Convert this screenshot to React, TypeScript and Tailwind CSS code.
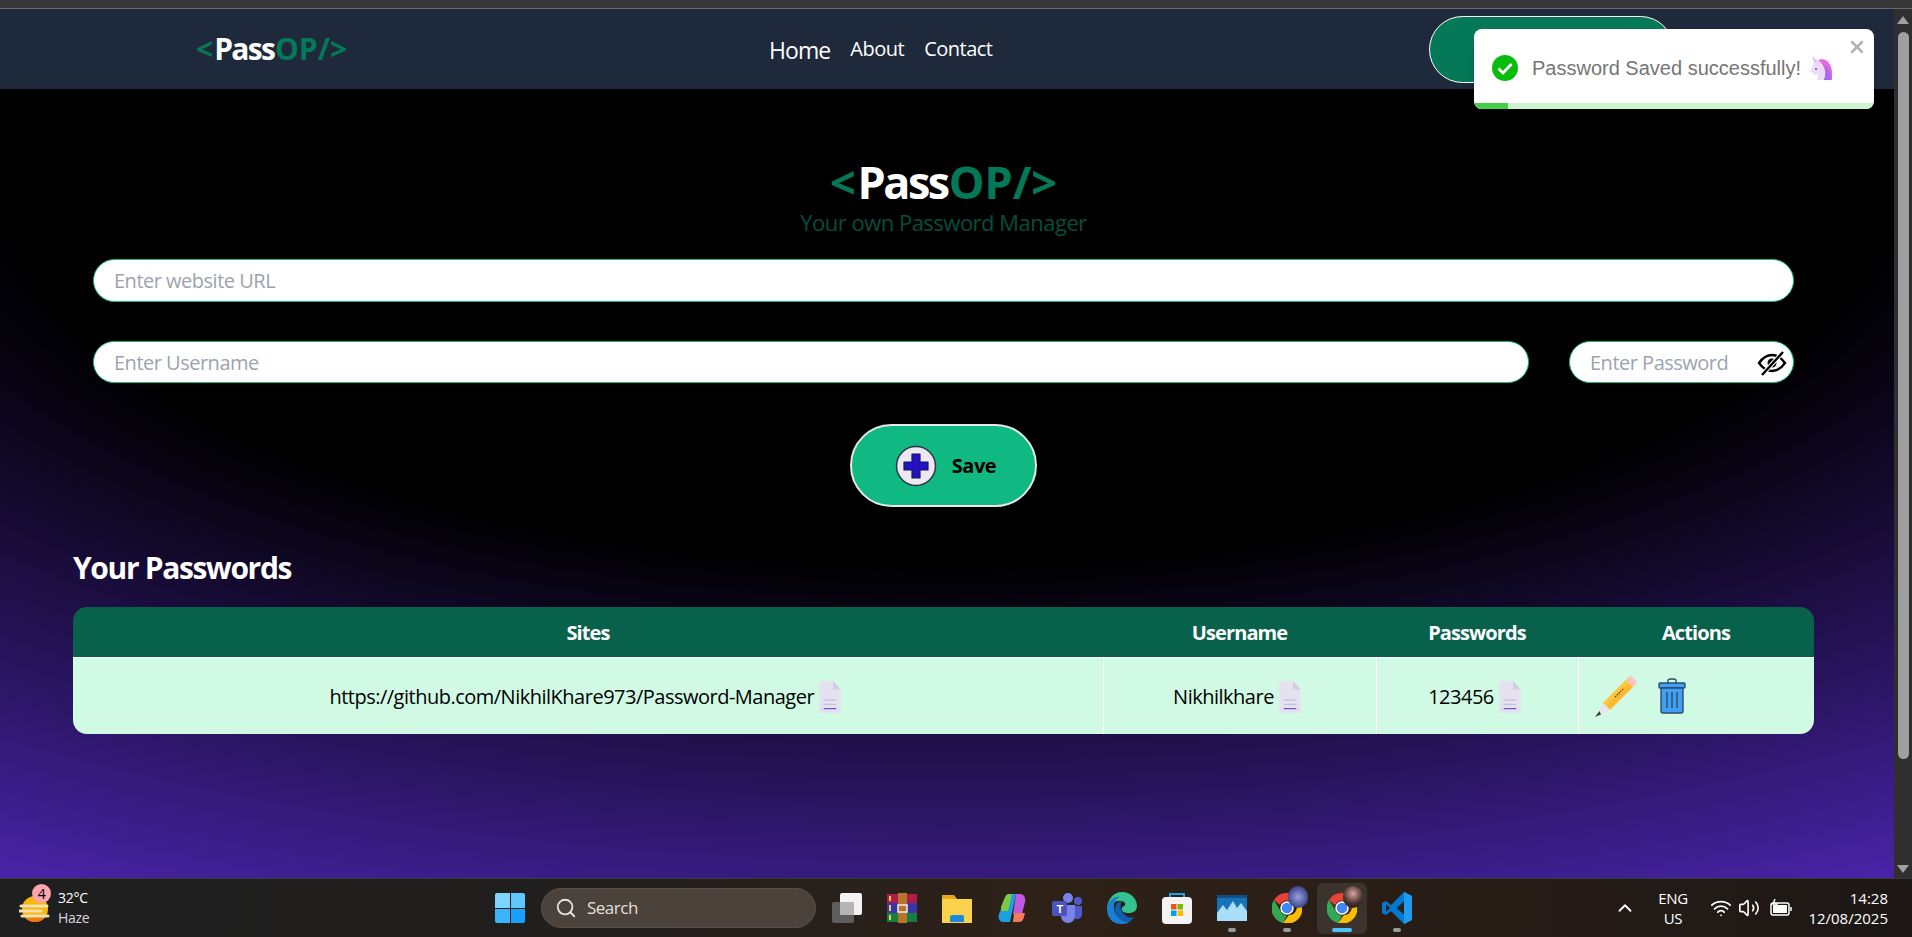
import { ChevronUp, Search, Volume2, Wifi, X } from "lucide-react"

const sans = "font-['Open_Sans','Noto_Sans',sans-serif]"

function Logo({ big }: { big?: boolean }) {
  return (
    <div className={`font-bold text-white leading-none whitespace-nowrap ${big ? "text-[45px]" : "text-[30px]"}`}>
      <span className="text-[#047857]">&lt;</span>
      <span className="ml-[0.05em] tracking-[-0.055em]">Pass</span>
      <span className="ml-[0.02em] text-[#047857] tracking-normal">OP/&gt;</span>
    </div>
  )
}

function Scrollbar() {
  return (
    <div className="w-[18px] shrink-0 bg-[#2f2f2f] flex flex-col items-center pt-[7px] pb-[5px]">
      <div className="w-0 h-0 border-x-[6px] border-x-transparent border-b-[8px] border-b-[#a0a0a0]" />
      <div className="mt-[8px] w-[11px] h-[727px] rounded-full bg-[#9f9f9f]" />
      <div className="mt-auto w-0 h-0 border-x-[6px] border-x-transparent border-t-[8px] border-t-[#a0a0a0]" />
    </div>
  )
}

function CopyIcon() {
  return (
    <svg width="24" height="34" viewBox="0 0 22 32" className="inline-block shrink-0">
      <path d="M1 1h13l7 8v22H1z" fill="#e6e1ee" />
      <path d="M14 1l7 8h-7z" fill="#d2cbe0" />
      <path d="M5 19h12M5 23h12" stroke="#c5bfe0" strokeWidth="1.2" />
      <path d="M5 27h12" stroke="#6a5acd" strokeWidth="1.2" />
    </svg>
  )
}

function EyeOff() {
  return (
    <svg width="30" height="26" viewBox="0 0 30 26" fill="none" stroke="#000" strokeWidth="2.4">
      <path d="M2 13C7 6 11 5 15 5s8 1 13 8c-5 7-9 8-13 8s-8-1-13-8z" />
      <circle cx="15" cy="13" r="4.5" fill="#000" stroke="none" />
      <path d="M5 25L26 2" stroke="#fff" strokeWidth="4.5" />
      <path d="M5 25L26 2" />
    </svg>
  )
}

function PlusIcon() {
  return (
    <svg width="42" height="42" viewBox="0 0 42 42">
      <circle cx="21" cy="21" r="19.5" fill="#ece8f2" stroke="#33304f" strokeWidth="1.5" />
      <path d="M17 9h8v8h8v8h-8v8h-8v-8H9v-8h8z" fill="#2311c4" stroke="#17145c" strokeWidth="1.2" strokeLinejoin="round" />
    </svg>
  )
}

function Pencil() {
  return (
    <svg width="44" height="44" viewBox="0 0 44 44">
      <path d="M10 29L33 6l7 7-23 23z" fill="#ffb92e" />
      <path d="M10 29L33 6l3 3-23 23z" fill="#ffc83f" />
      <path d="M33 6l3-3a2 2 0 0 1 3 0l4 4a2 2 0 0 1 0 3l-3 3z" fill="#fbc3ba" />
      <path d="M10 29l7 7-13 6z" fill="#ebe3ee" />
      <path d="M6.5 37l1.5 3.5L2 43z" fill="#3d3a47" />
      <path d="M22 23l9-9" stroke="#4a4033" strokeWidth="1.2" strokeDasharray="1.5 1" />
    </svg>
  )
}

function Trash() {
  return (
    <svg width="28" height="36" viewBox="0 0 28 36">
      <path d="M10 5V3a2 2 0 0 1 2-2h4a2 2 0 0 1 2 2v2" fill="none" stroke="#2f4a63" strokeWidth="1.4" />
      <rect x="1" y="5" width="26" height="5" rx="1" fill="#3fa1f5" stroke="#2f4a63" strokeWidth="1.4" />
      <path d="M3 10h22v23a2 2 0 0 1-2 2H5a2 2 0 0 1-2-2z" fill="#3fa1f5" stroke="#2f4a63" strokeWidth="1.4" />
      <path d="M9 14v16M14 14v16M19 14v16" stroke="#2f4a63" strokeWidth="1.4" />
    </svg>
  )
}

function Unicorn() {
  return (
    <svg width="24" height="26" viewBox="0 0 24 26">
      <path d="M3 1l7 6-4 4z" fill="#d9c6f5" />
      <path d="M6 7c6-3 14 0 15 9v9H8l1-6-3 1-5-4z" fill="#eadcf8" />
      <path d="M9 5c8-3 13 3 14 11v9h-8c3-6 1-15-6-20z" fill="#e568e0" />
      <path d="M15 25c2-6 2-11 0-15 5 3 7 9 7 15z" fill="#a868f0" />
      <circle cx="7" cy="14" r="1" fill="#6a4fa0" />
    </svg>
  )
}

function Toast() {
  return (
    <div className="absolute left-[1474px] top-[29px] w-[400px] h-[80px] rounded-lg bg-white shadow-lg overflow-hidden font-['Liberation_Sans',sans-serif] tracking-normal">
      <div className="flex items-center h-[74px] pt-[4px] pl-[18px] pr-[10px]">
        <svg width="26" height="26" viewBox="0 0 26 26" className="shrink-0">
          <circle cx="13" cy="13" r="13" fill="#07bc0c" />
          <path d="M6.5 13.5l4.5 4.500L19.500 9" fill="none" stroke="#fff" strokeWidth="2.800" />
        </svg>
        <span className="ml-[14px] text-[20px] text-[#757575] whitespace-nowrap">Password Saved successfully!</span>
        <span className="ml-[8px]">
          <Unicorn />
        </span>
        <X className="absolute right-[7px] top-[8px] w-[20px] h-[20px] text-[#b3b3b3]" strokeWidth={3} />
      </div>
      <div className="h-[6px] bg-[#cdf2ce]">
        <div className="h-full w-[34px] bg-[#45cf49]" />
      </div>
    </div>
  )
}

function Navbar() {
  return (
    <nav className="h-[80px] shrink-0 bg-[#1e293b] flex items-center text-white">
      <div className="w-[769px] pl-[196px]">
        <Logo />
      </div>
      <ul className="w-[660px] flex items-center gap-[20px] text-[20px]">
        <li className="text-[23px] mt-[3px] tracking-[-0.04em]">Home</li>
        <li>About</li>
        <li>Contact</li>
      </ul>
      <button className="w-[245px] h-[67px] rounded-full bg-[#047857] border border-white" />
    </nav>
  )
}

function Main() {
  const rows = [
    { site: "https://github.com/NikhilKhare973/Password-Manager", user: "Nikhilkhare", pass: "123456" },
  ]

  return (
    <main className="flex-1 bg-black bg-[radial-gradient(125%_125%_at_50%_10%,#000_40%,#63e_100%)] pl-[73px] pr-[80px] pt-[70px]">
      <div className="flex flex-col items-center">
        <Logo big />
        <p className="mt-[4px] text-[22px] leading-[28px] text-[#064e3b]">Your own Password Manager</p>
      </div>

      <div className="px-[20px] mt-[23px] flex flex-col gap-[39px]">
        <input
          placeholder="Enter website URL"
          className="h-[43px] w-full rounded-full bg-white border border-[#10b981] px-[20px] text-[20px] text-black placeholder:text-[#9ca3af] outline-none"
        />
        <div className="flex gap-[40px]">
          <input
            placeholder="Enter Username"
            className="h-[42px] flex-1 rounded-full bg-white border border-[#10b981] px-[20px] text-[20px] placeholder:text-[#9ca3af] outline-none"
          />
          <div className="relative w-[225px]">
            <input
              placeholder="Enter Password"
              className="h-[42px] w-full rounded-full bg-white border border-[#10b981] pl-[20px] pr-[40px] text-[20px] placeholder:text-[#9ca3af] outline-none"
            />
            <span className="absolute right-[7px] top-[9px]">
              <EyeOff />
            </span>
          </div>
        </div>
      </div>

      <div className="flex justify-center mt-[41px]">
        <button className="w-[187px] h-[83px] pl-[4px] rounded-full bg-[#10b981] border-2 border-[#e5e7eb] flex items-center justify-center gap-[15px] text-[20px] font-bold text-black">
          <PlusIcon />
          Save
        </button>
      </div>

      <h2 className="mt-[43px] text-[30px] leading-[36px] font-bold text-white tracking-[-0.045em]">Your Passwords</h2>

      <div className="mt-[21px] rounded-[14px] overflow-hidden">
        <table className="w-full table-fixed border-collapse text-[20px]">
          <colgroup>
            <col className="w-[1030px]" />
            <col className="w-[273px]" />
            <col className="w-[202px]" />
            <col />
          </colgroup>
          <thead className="bg-[#08614a] text-white">
            <tr className="h-[50px] tracking-[-0.045em]">
              <th className="font-bold pt-[2px]">Sites</th>
              <th className="font-bold pt-[2px]">Username</th>
              <th className="font-bold pt-[2px]">Passwords</th>
              <th className="font-bold pt-[2px]">Actions</th>
            </tr>
          </thead>
          <tbody className="bg-[#d1fae5] text-black">
            {rows.map((r) => (
              <tr key={r.site} className="h-[77px]">
                <td className="border-t border-white">
                  <div className="flex items-center justify-center gap-[4px] pr-[4px] pt-[2px]">
                    {r.site}
                    <CopyIcon />
                  </div>
                </td>
                <td className="border border-b-0 border-white">
                  <div className="flex items-center justify-center gap-[4px] pr-[4px] pt-[2px]">
                    {r.user}
                    <CopyIcon />
                  </div>
                </td>
                <td className="border border-b-0 border-white">
                  <div className="flex items-center justify-center gap-[4px] pr-[4px] pt-[2px]">
                    {r.pass}
                    <CopyIcon />
                  </div>
                </td>
                <td className="border-t border-white pl-[14px]">
                  <div className="flex items-center gap-[21px]">
                    <Pencil />
                    <Trash />
                  </div>
                </td>
              </tr>
            ))}
          </tbody>
        </table>
      </div>
    </main>
  )
}

function WeatherIcon() {
  return (
    <div className="relative w-[34px] h-[34px]">
      <svg width="34" height="34" viewBox="0 0 34 34" className="absolute left-0 top-0">
        <circle cx="16" cy="18" r="13" fill="#f5b90b" />
        <path d="M5 25a13 13 0 0 0 22 0z" fill="#ec7a0d" />
        <path d="M2 15h26M0 20h22M3 25h26" stroke="#f2dfb2" strokeWidth="3" strokeLinecap="round" />
      </svg>
      <span className="absolute left-[13px] top-[-7px] w-[19px] h-[19px] rounded-full bg-[#fda4af] text-black text-[14px] leading-[19px] text-center">
        4
      </span>
    </div>
  )
}

function WinLogo() {
  return (
    <div className="grid grid-cols-2 gap-[1px] w-[30px] h-[30px] shrink-0">
      <div className="rounded-tl-[2px] bg-[#7ed4fb]" />
      <div className="rounded-tr-[2px] bg-[#5cc8fb]" />
      <div className="rounded-bl-[2px] bg-[#3ab4fb]" />
      <div className="rounded-br-[2px] bg-[#18a0fb]" />
    </div>
  )
}

function TaskView() {
  return (
    <svg width="30" height="30" viewBox="0 0 30 30">
      <rect x="0" y="9" width="22" height="21" rx="2" fill="#5e5e5e" />
      <rect x="8" y="0" width="22" height="22" rx="2" fill="#f2f2f2" />
      <rect x="8" y="9" width="14" height="13" fill="#b5b5b5" />
    </svg>
  )
}

function WinRar() {
  return (
    <svg width="30" height="30" viewBox="0 0 30 30">
      <rect x="0" y="1" width="30" height="9" fill="#b11d4b" />
      <rect x="0" y="10" width="30" height="10" fill="#3a35a8" />
      <rect x="0" y="20" width="30" height="9" fill="#15803d" />
      <path d="M3 3v5M3 12v6M3 22v5" stroke="#f7c948" strokeWidth="2" />
      <rect x="11" y="0" width="9" height="30" fill="#b8742a" />
      <rect x="11" y="12" width="9" height="7" fill="none" stroke="#eee" strokeWidth="1.5" />
    </svg>
  )
}

function Folder() {
  return (
    <svg width="30" height="30" viewBox="0 0 30 30">
      <path d="M0 2h12l3 4h15v24H0z" fill="#e6a91d" />
      <rect x="0" y="6" width="30" height="24" rx="1" fill="#fbd24e" />
      <path d="M8 24a2 2 0 0 1 2-2h10a2 2 0 0 1 2 2v5H8z" fill="#1e88d8" />
    </svg>
  )
}

function Copilot() {
  return (
    <svg width="28" height="30" viewBox="0 0 28 30">
      <path d="M10 1h8l-6 28H5C1 29 0 25 1 21z" fill="#1ba0e0" />
      <path d="M3 14L7 4c1-2 2-3 4-3h3l-4 17H3z" fill="#7cc94a" />
      <path d="M18 1h4c4 0 6 4 5 8l-3 12H15z" fill="#c05ae0" />
      <path d="M15 29h6c3 0 4-2 5-5l1-4H16z" fill="#f27a5e" />
    </svg>
  )
}

function Teams() {
  return (
    <svg width="30" height="30" viewBox="0 0 30 30">
      <circle cx="16" cy="5" r="5" fill="#7b83eb" />
      <circle cx="26" cy="8" r="4" fill="#5059c9" />
      <path d="M21 13h9v9a5 5 0 0 1-9 2z" fill="#5059c9" />
      <path d="M9 12h14v11a7 7 0 0 1-14 0z" fill="#7b83eb" />
      <rect x="0" y="8" width="15" height="15" rx="2" fill="#4b53bc" />
      <text x="7.5" y="20" textAnchor="middle" fill="#fff" fontSize="11" fontWeight="700" fontFamily="Liberation Sans">
        T
      </text>
    </svg>
  )
}

function Edge() {
  return (
    <svg width="30" height="32" viewBox="0 0 30 32">
      <path d="M15 0c9 0 15 7 15 14 0 5-4 7-8 7-5 0-8-2-7-5 1-2 4-2 3-5-2-3-8-3-12 0C3 13 1 16 0 18 0 8 6 0 15 0z" fill="#34c38f" />
      <path d="M0 17C1 8 8 4 13 5c-6 2-7 9-5 15 2 6 8 10 14 10-3 2-6 2-8 2C6 32 0 26 0 17z" fill="#1a7fd1" />
      <path d="M8 17c0-4 3-8 7-8-3 4-1 11 3 14 3 3 7 3 9 2-1 2-3 4-5 5-7 1-14-6-14-13z" fill="#0f5fb0" />
    </svg>
  )
}

function Store() {
  return (
    <svg width="30" height="32" viewBox="0 0 30 32">
      <path d="M8 6V2h14v4" fill="none" stroke="#1da1e8" strokeWidth="2" />
      <rect x="0" y="5" width="30" height="27" rx="4" fill="#f3f3f3" />
      <rect x="9" y="12" width="5.5" height="5.5" fill="#f25022" />
      <rect x="15.5" y="12" width="5.5" height="5.5" fill="#7fba00" />
      <rect x="9" y="18.5" width="5.5" height="5.5" fill="#00a4ef" />
      <rect x="15.5" y="18.5" width="5.5" height="5.5" fill="#ffb900" />
    </svg>
  )
}

function Photos() {
  return (
    <svg width="30" height="30" viewBox="0 0 30 30">
      <rect x="0" y="2" width="30" height="26" fill="#1673b8" />
      <path d="M0 20l6-8 4 5 6-9 4 7 4-5 6 8v10H0z" fill="#a9def9" />
      <rect x="0" y="2" width="30" height="3" fill="#0d4f87" />
    </svg>
  )
}

function Chrome({ badge }: { badge: string }) {
  return (
    <div className="relative w-[30px] h-[30px]">
      <svg width="30" height="30" viewBox="0 0 30 30">
        <path d="M15 0a15 15 0 0 1 13 7.5H15a7.5 7.5 0 0 0-7 4.5L2 7A15 15 0 0 1 15 0z" fill="#ea4335" />
        <path d="M2 7l6.5 11a7.5 7.5 0 0 0 6.5 4.500L11 30A15 15 0 0 1 2 7z" fill="#34a853" />
        <path d="M28 7.500A15 15 0 0 1 11 30l6-8a7.500 7.500 0 0 0 3-14.500z" fill="#fbbc04" />
        <circle cx="15" cy="15" r="6" fill="#4285f4" stroke="#fff" strokeWidth="1.500" />
      </svg>
      <span className={`absolute left-[16px] top-[-7px] w-[20px] h-[22px] rounded-full ${badge}`} />
    </div>
  )
}

function VsCode() {
  return (
    <svg width="30" height="32" viewBox="0 0 30 32">
      <path d="M22 0l8 4v24l-8 4L9 19l-5 4-4-2v-10l4-2 5 4z" fill="#0078d4" />
      <path d="M22 0l8 4v24l-8 4z" fill="#1f9cf0" />
      <path d="M4 12l4 4-4 4zM22 9.500L14.500 16l7.500 6.500z" fill="#2b2019" />
    </svg>
  )
}

function Slot({ children, mark }: { children: React.ReactNode; mark?: "gray" | "active" }) {
  return (
    <div className="relative w-[55px] h-[50px] flex items-center justify-center">
      {mark === "active" && <span className="absolute left-[3px] top-0 w-[50px] h-[51px] rounded-md bg-[#3a332e]" />}
      <span className="relative">{children}</span>
      {mark === "gray" && <span className="absolute left-[24px] bottom-[1px] w-[8px] h-[4px] rounded-full bg-[#9a9a9a]" />}
      {mark === "active" && <span className="absolute left-[18px] bottom-[1px] w-[20px] h-[4px] rounded-full bg-[#4cc2ff]" />}
    </div>
  )
}

function Taskbar() {
  return (
    <footer className="relative h-[59px] shrink-0 border-t border-[#3a3a3a] bg-[linear-gradient(90deg,#1f1f1f_0%,#211f1e_30%,#2e2118_55%,#2a1e16_70%,#1c1716_100%)] flex items-center text-white font-['Open_Sans',sans-serif]">
      <div className="w-[495px] shrink-0 pl-[19px] flex items-center gap-[5px]">
        <WeatherIcon />
        <div className="text-[14px] leading-[20px] tracking-[-0.02em]">
          <div>32°C</div>
          <div className="text-[#d8d8d8]">Haze</div>
        </div>
      </div>
      <WinLogo />
      <div className="ml-[16px] w-[275px] h-[40px] shrink-0 rounded-full bg-[#4b423c] border border-[#5a514a] flex items-center pl-[13px] gap-[10px] text-[17px] text-[#e3e0dd]">
        <Search className="w-[22px] h-[22px]" strokeWidth={2} />
        Search
      </div>
      <div className="ml-[3px] flex items-center shrink-0">
        <Slot><TaskView /></Slot>
        <Slot><WinRar /></Slot>
        <Slot><Folder /></Slot>
        <Slot><Copilot /></Slot>
        <Slot><Teams /></Slot>
        <Slot><Edge /></Slot>
        <Slot><Store /></Slot>
        <Slot mark="gray"><Photos /></Slot>
        <Slot mark="gray"><Chrome badge="bg-[radial-gradient(circle,#9aa0e0_0%,#3e478f_70%)]" /></Slot>
        <Slot mark="active"><Chrome badge="bg-[radial-gradient(circle_at_50%_35%,#d9a7a0_0%,#4a3230_55%,#111_100%)]" /></Slot>
        <Slot mark="gray"><VsCode /></Slot>
      </div>
      <ChevronUp className="ml-[190px] w-[22px] h-[22px] shrink-0" strokeWidth={2} />
      <div className="ml-[19px] w-[36px] shrink-0 text-center text-[15px] leading-[20px] tracking-[-0.02em]">
        <div>ENG</div>
        <div>US</div>
      </div>
      <Wifi className="ml-[19px] w-[22px] h-[22px] shrink-0" strokeWidth={2} />
      <Volume2 className="ml-[6px] w-[22px] h-[22px] shrink-0" strokeWidth={1.75} />
      <svg width="22" height="18" viewBox="0 0 22 18" fill="none" stroke="#fff" strokeWidth="1.5" className="ml-[10px] shrink-0">
        <rect x="1" y="4" width="18" height="12" rx="2" />
        <rect x="3" y="6" width="14" height="8" fill="#fff" stroke="none" />
        <path d="M21 8v4" />
        <path d="M5 0L3 5h4l-2 4" />
      </svg>
      <div className="ml-auto pr-[24px] text-right text-[15px] leading-[20px] tracking-normal whitespace-nowrap">
        <div>14:28</div>
        <div>12/08/2025</div>
      </div>
    </footer>
  )
}

export default function App() {
  return (
    <div className={`relative h-[937px] w-[1912px] overflow-hidden flex flex-col bg-black text-[20px] tracking-[-0.025em] ${sans}`}>
      <div className="h-[9px] shrink-0 bg-[#363636] border-b border-[#6a6a6a]" />
      <div className="flex-1 min-h-0 flex">
        <div className="flex-1 min-w-0 flex flex-col">
          <Navbar />
          <Main />
        </div>
        <Scrollbar />
      </div>
      <Taskbar />
      <Toast />
    </div>
  )
}
